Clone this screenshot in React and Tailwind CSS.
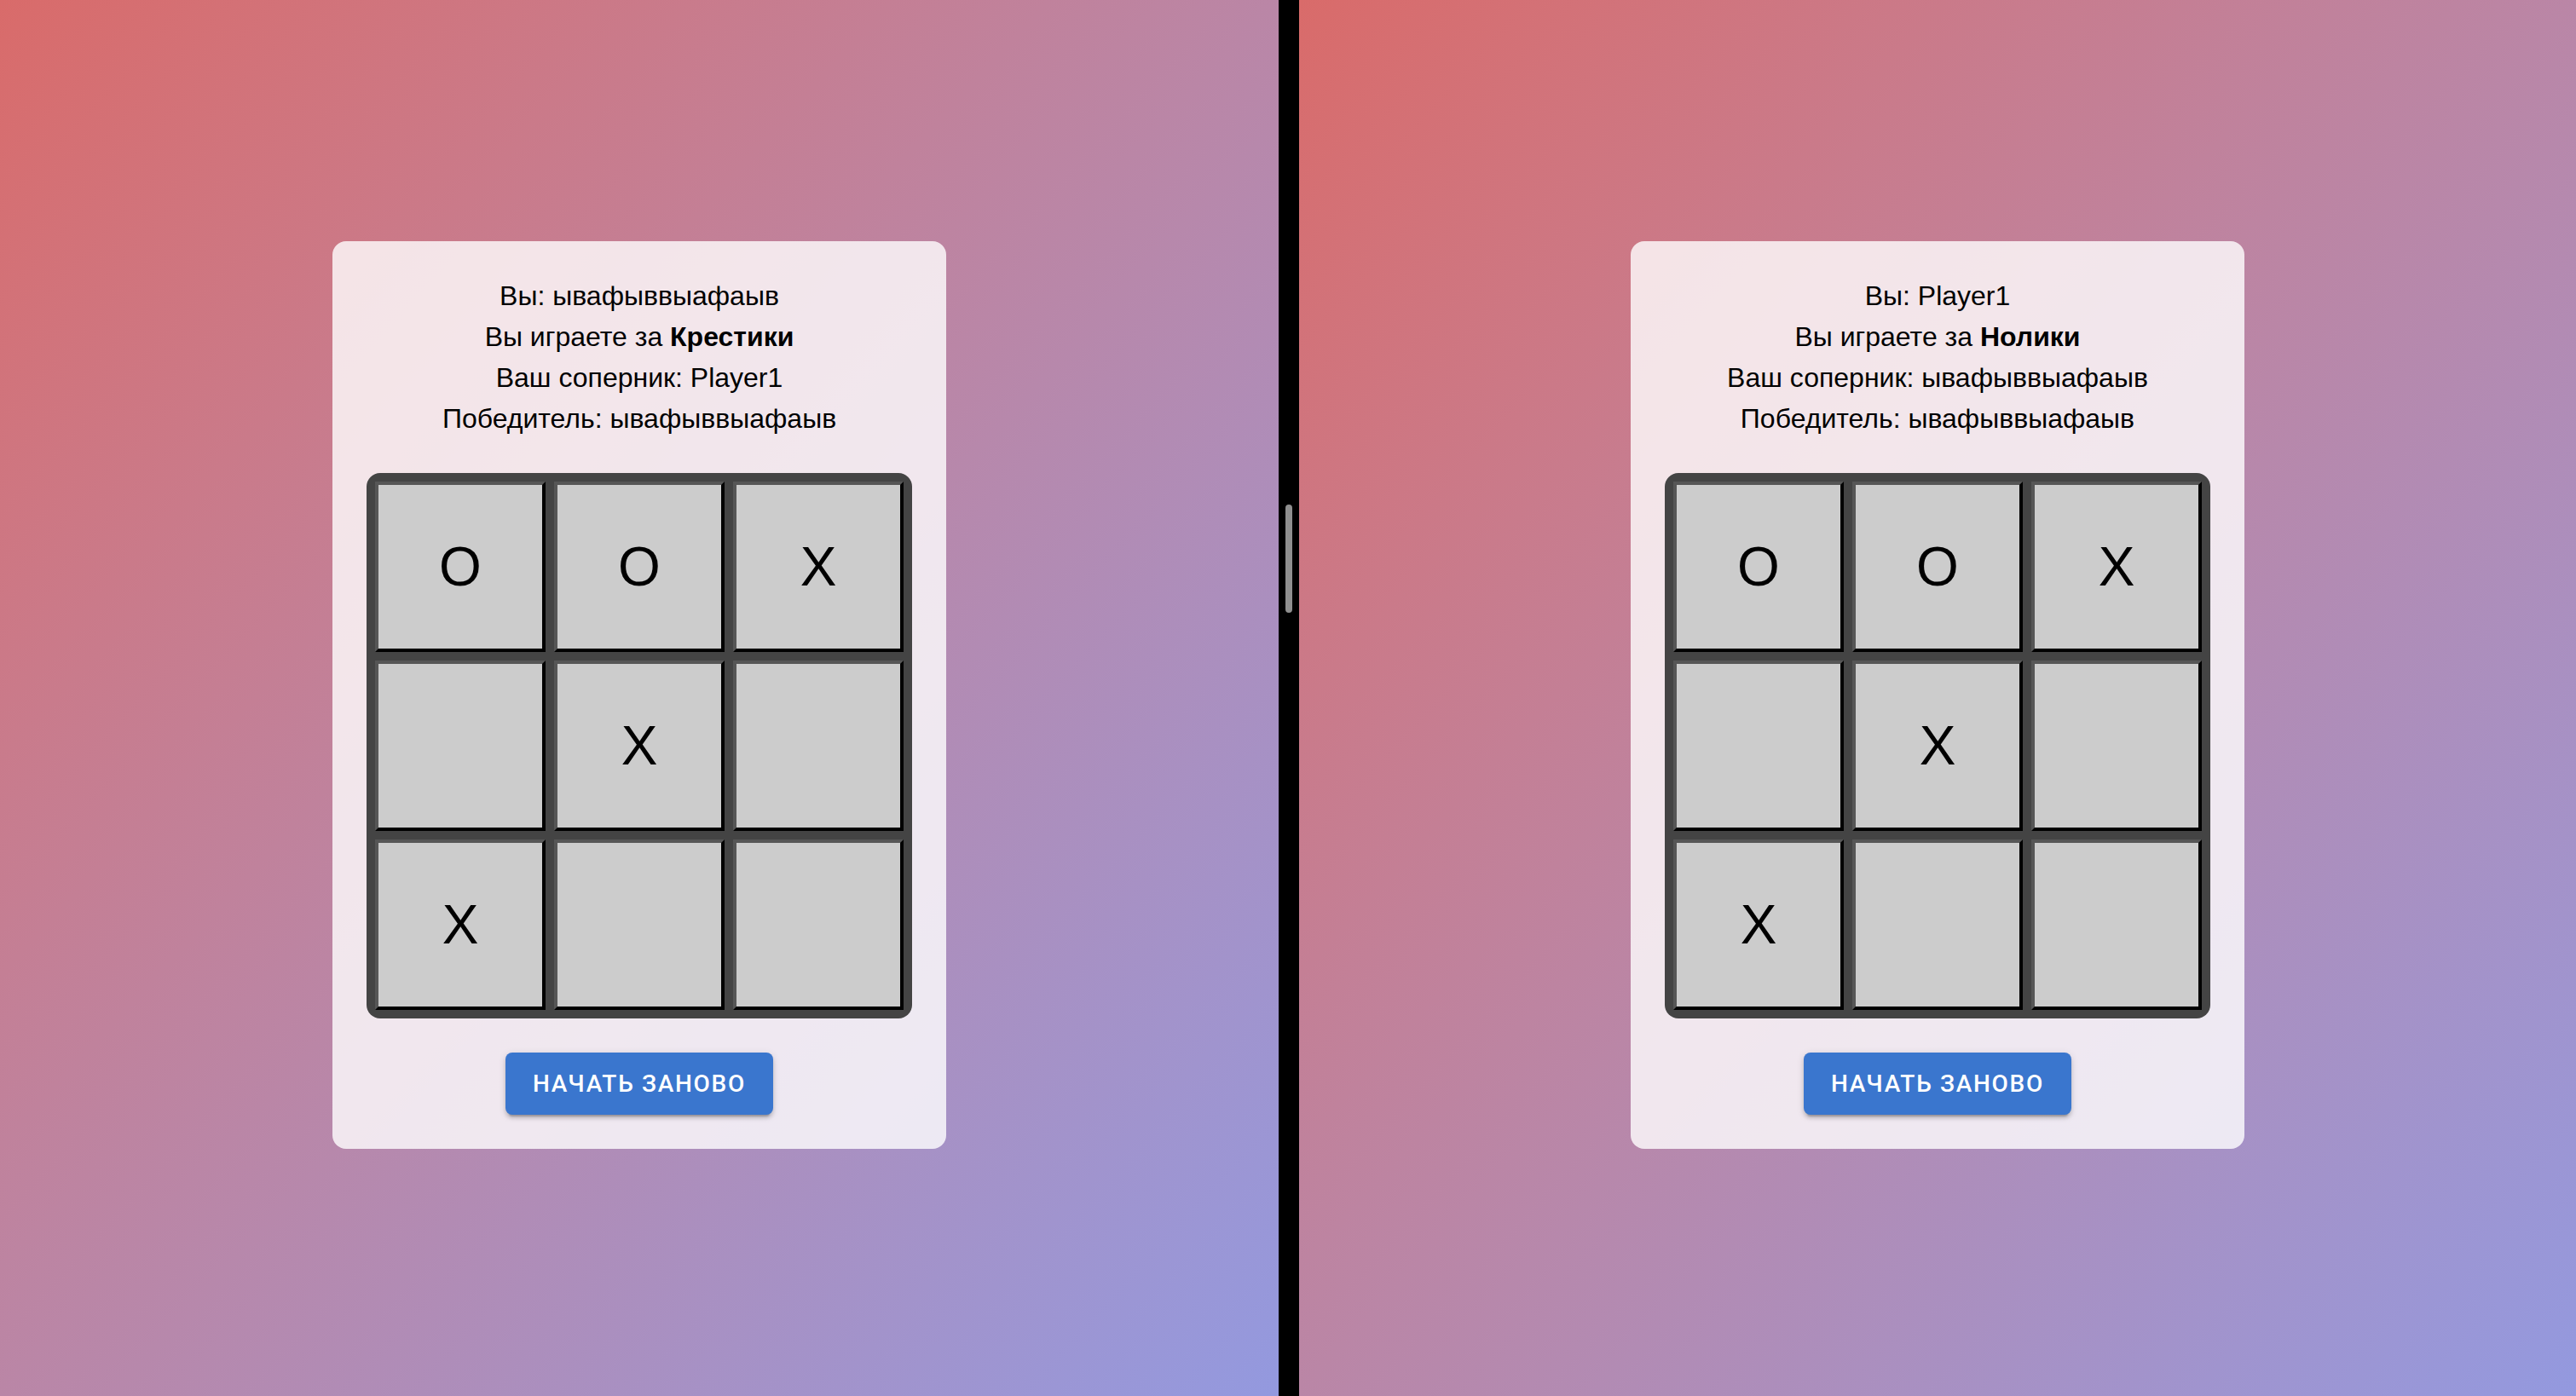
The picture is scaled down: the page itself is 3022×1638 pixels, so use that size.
import React from "react";

const board = ["O", "O", "X", "", "X", "", "X", "", ""];

const GamePanel = ({ me, side, rival, winner }) => {
  return (
    <div className="h-full flex items-center justify-center pb-[7px] bg-gradient-to-br from-[#d96b6a] to-[#9399df]">
      <div className="w-[720px] rounded-[16px] bg-white/80 p-[40px] flex flex-col items-center gap-[40px]">
        <div className="text-center text-[32px] leading-[48px] text-black font-['Liberation_Sans',Arial,sans-serif]">
          <p>Вы: {me}</p>
          <p>
            Вы играете за <b>{side}</b>
          </p>
          <p>Ваш соперник: {rival}</p>
          <p>Победитель: {winner}</p>
        </div>

        {/* board */}
        <div className="grid grid-cols-3 gap-[10px] p-[10px] bg-[#444] rounded-[16px]">
          {board.map((cell, i) => (
            <div
              key={i}
              className="w-[200px] h-[200px] bg-[#ccc] border-[4px] border-t-[#565656] border-l-[#565656] border-b-black border-r-black flex items-center justify-center text-[64px] text-black font-['Liberation_Sans',Arial,sans-serif]"
            >
              {cell}
            </div>
          ))}
        </div>

        <button className="bg-[#3a76ce] text-white rounded-[8px] px-[32px] h-[73px] text-[28px] font-medium uppercase tracking-[1.7px] font-['Roboto',sans-serif] shadow-[0_6px_2px_-4px_rgba(0,0,0,0.2),0_4px_4px_0_rgba(0,0,0,0.14),0_2px_10px_0_rgba(0,0,0,0.12)]">
          Начать заново
        </button>
      </div>
    </div>
  );
};

const App = () => {
  return (
    <div className="flex h-[1638px] w-full bg-black">
      <div className="w-[1500px] h-full">
        <GamePanel
          me="ывафыввыафаыв"
          side="Крестики"
          rival="Player1"
          winner="ывафыввыафаыв"
        />
      </div>

      {/* split divider */}
      <div className="w-[24px] h-full bg-black flex flex-col items-center pt-[592px]">
        <div className="w-[8px] h-[127px] rounded-full bg-[#8f8f8f]" />
      </div>

      <div className="flex-1 h-full">
        <GamePanel
          me="Player1"
          side="Нолики"
          rival="ывафыввыафаыв"
          winner="ывафыввыафаыв"
        />
      </div>
    </div>
  );
};

export default App;
